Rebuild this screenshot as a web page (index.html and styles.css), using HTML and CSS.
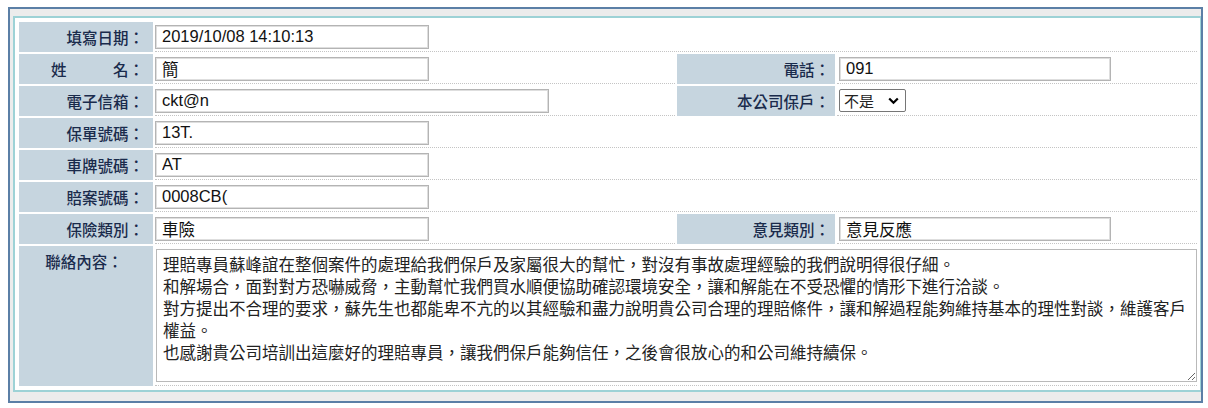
FILE: index.html
```html
<!DOCTYPE html>
<html>

<head>
	<meta charset="UTF-8">
	<link rel="stylesheet" href="styles.css">
</head>

<body>
	<div class="frame">
		<div class="panel">
			<table class="form-table">
				<colgroup>
					<col class="col-label">
					<col class="col-value">
					<col class="col-label2">
					<col class="col-value2">
				</colgroup>
				<tr>
					<th>填寫日期：</th>
					<td colspan="3"><input class="field" type="text" value="2019/10/08 14:10:13"></td>
				</tr>
				<tr>
					<th>姓&emsp;&emsp;&emsp;名：</th>
					<td><input class="field" type="text" value="簡"></td>
					<th class="right">電話：</th>
					<td><input class="field side" type="text" value="091"></td>
				</tr>
				<tr>
					<th>電子信箱：</th>
					<td><input class="field wide" type="text" value="ckt@n"></td>
					<th class="right">本公司保戶：</th>
					<td>
						<span class="select-wrap">
							<select class="choice">
								<option>不是</option>
								<option>是</option>
							</select>
							<svg class="chevron" width="11" height="8" viewBox="0 0 11 8">
								<path d="M1.2 1.4 L5.5 5.8 L9.8 1.4" fill="none" stroke="#000" stroke-width="2.2" />
							</svg>
						</span>
					</td>
				</tr>
				<tr>
					<th>保單號碼：</th>
					<td colspan="3"><input class="field" type="text" value="13T."></td>
				</tr>
				<tr>
					<th>車牌號碼：</th>
					<td colspan="3"><input class="field" type="text" value="AT"></td>
				</tr>
				<tr>
					<th>賠案號碼：</th>
					<td colspan="3"><input class="field" type="text" value="0008CB("></td>
				</tr>
				<tr>
					<th>保險類別：</th>
					<td><input class="field" type="text" value="車險"></td>
					<th class="right">意見類別：</th>
					<td><input class="field side" type="text" value="意見反應"></td>
				</tr>
				<tr class="tall">
					<th class="top">聯絡內容：</th>
					<td colspan="3"><textarea class="content">理賠專員蘇峰誼在整個案件的處理給我們保戶及家屬很大的幫忙，對沒有事故處理經驗的我們說明得很仔細。
和解場合，面對對方恐嚇威脅，主動幫忙我們買水順便協助確認環境安全，讓和解能在不受恐懼的情形下進行洽談。
對方提出不合理的要求，蘇先生也都能卑不亢的以其經驗和盡力說明貴公司合理的理賠條件，讓和解過程能夠維持基本的理性對談，維護客戶權益。
也感謝貴公司培訓出這麼好的理賠專員，讓我們保戶能夠信任，之後會很放心的和公司維持續保。</textarea></td>
				</tr>
			</table>
		</div>
	</div>
</body>

</html>
```

FILE: styles.css
```css
body {
	margin: 7px 5px 0 8px;
	font-family: "Liberation Sans", "Noto Sans CJK TC", sans-serif;
}

.frame {
	border: 2px solid #5b7fa6;
	background: #ececec;
	padding: 7px 0 9px 3px;
}

.panel {
	background: #fff;
	border: 2px solid #9dd2d6;
	border-right-width: 1px;
	padding: 2px;
}

.form-table {
	border-spacing: 2px;
	width: 1182px;
	table-layout: fixed;
}

.col-label {
	width: 134px;
}

.col-value {
	width: 520px;
}

.col-label2 {
	width: 158px;
}

.col-value2 {
	width: 360px;
}

.form-table tr {
	height: 30px;
}

.form-table tr.tall {
	height: 139px;
}

.form-table th {
	background: #c6d5df;
	color: #1a2b4c;
	font-family: "Noto Sans CJK TC", sans-serif;
	font-weight: 500;
	font-size: 15.5px;
	text-align: right;
	padding: 0 9px 0 0;
	white-space: nowrap;
}

.form-table th.right {
	padding-right: 5px;
}

.form-table th.top {
	vertical-align: top;
	text-align: center;
	padding: 4px 4px 0 0;
}

.form-table td {
	padding: 0;
	border-bottom: 1px dotted #c4c4c4;
	vertical-align: middle;
}

.field {
	box-sizing: border-box;
	width: 274px;
	height: 24px;
	margin: 0;
	padding: 0 6px;
	border: 1px solid #b4b4b4;
	box-shadow: inset 0 0 0 1px #dedede;
	font-family: "Liberation Sans", "Noto Sans CJK TC", sans-serif;
	font-size: 16.5px;
	color: #111;
	display: block;
}

.field.wide {
	width: 394px;
}

.field.side {
	width: 272px;
	margin-left: 2px;
}

.select-wrap {
	position: relative;
	display: block;
	width: 67px;
	margin-left: 2px;
}

.choice {
	display: block;
	-webkit-appearance: none;
	appearance: none;
	box-sizing: border-box;
	height: 23px;
	width: 67px;
	border: 1px solid #767676;
	border-radius: 2px;
	background: #fff;
	font-family: "Noto Sans CJK TC", sans-serif;
	font-size: 15px;
	color: #222;
	padding: 0 0 0 4px;
}

.chevron {
	position: absolute;
	right: 7px;
	top: 8px;
	pointer-events: none;
}

.content {
	display: block;
	box-sizing: border-box;
	width: 1041px;
	height: 133px;
	margin: 3px 0 3px 1px;
	padding: 4px 6px;
	border: 1px solid #b9b9b9;
	font-family: "Liberation Sans", "Noto Sans CJK TC", sans-serif;
	font-size: 16.5px;
	line-height: 22px;
	color: #222;
}
```
